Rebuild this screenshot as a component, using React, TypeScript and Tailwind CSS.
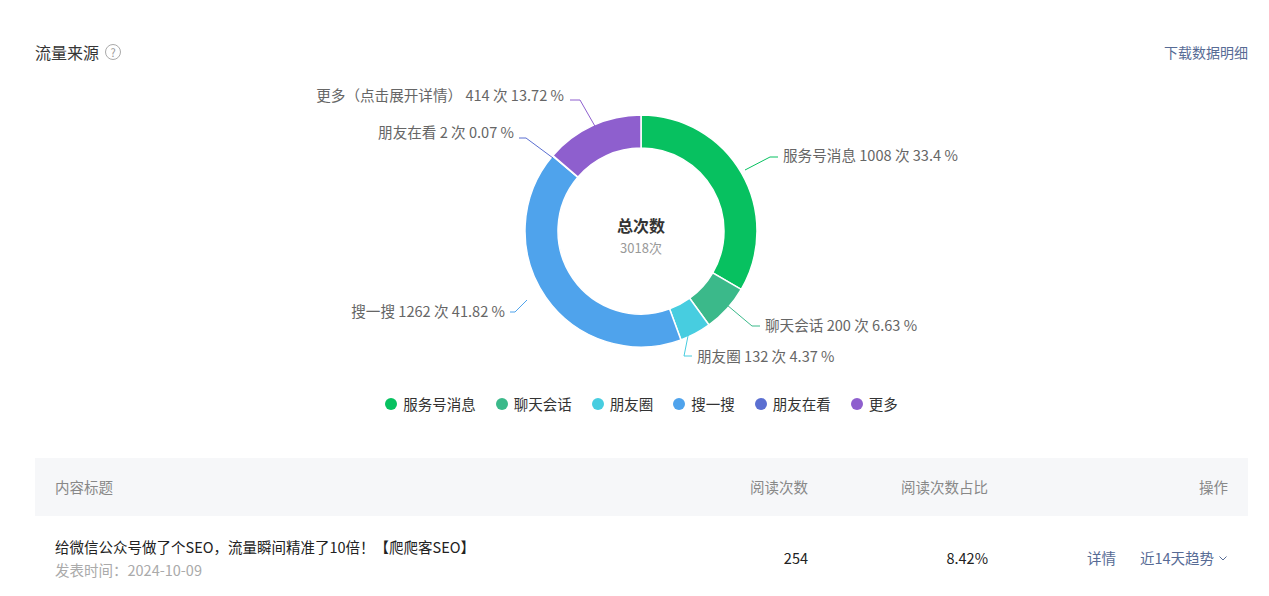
import React from "react";

const segs = [
  { v: 1008, c: "#07c160" },
  { v: 200, c: "#3bb98a" },
  { v: 132, c: "#47cde0" },
  { v: 1262, c: "#4fa3ec" },
  { v: 2, c: "#5b6fd1" },
  { v: 414, c: "#8e5fce" },
];

const legend = [
  ["服务号消息", "#07c160"],
  ["聊天会话", "#3bb98a"],
  ["朋友圈", "#47cde0"],
  ["搜一搜", "#4fa3ec"],
  ["朋友在看", "#5b6fd1"],
  ["更多", "#8e5fce"],
];

function arc(cx: number, cy: number, r0: number, r1: number, a0: number, a1: number) {
  const p = (r: number, a: number) => [cx + r * Math.sin(a), cy - r * Math.cos(a)];
  const large = a1 - a0 > Math.PI ? 1 : 0;
  const [x0, y0] = p(r1, a0);
  const [x1, y1] = p(r1, a1);
  const [x2, y2] = p(r0, a1);
  const [x3, y3] = p(r0, a0);
  return `M${x0} ${y0}A${r1} ${r1} 0 ${large} 1 ${x1} ${y1}L${x2} ${y2}A${r0} ${r0} 0 ${large} 0 ${x3} ${y3}Z`;
}

function Donut() {
  const total = segs.reduce((s, x) => s + x.v, 0);
  let a = 0;
  const labels: [string, string, number, number, string, boolean][] = [
    ["745,170 770,157 778,157", "服务号消息 1008 次 33.4 %", 783, 161, "#07c160", false],
    ["727,305 752,326 760,326", "聊天会话 200 次 6.63 %", 765, 331, "#3bb98a", false],
    ["689,331 684,356 692,356", "朋友圈 132 次 4.37 %", 697, 362, "#47cde0", false],
    ["527,300 515,312 510,312", "搜一搜 1262 次 41.82 %", 505, 317, "#4fa3ec", true],
    ["553,158 526,138 519,138", "朋友在看 2 次 0.07 %", 514, 138, "#5b6fd1", true],
    ["596,128 580,100 570,100", "更多（点击展开详情） 414 次 13.72 %", 564, 101, "#8e5fce", true],
  ];
  return (
    <svg width="1213" height="300" className="block">
      <g transform="translate(-35,-80)">
        {segs.map((s, i) => {
          const a0 = a;
          const a1 = a + (s.v / total) * Math.PI * 2;
          a = a1;
          return <path key={i} d={arc(641, 231, 83, 116, a0, Math.max(a1, a0 + 0.004))} fill={s.c} stroke="#fff" strokeWidth="1.5" />;
        })}
        {labels.map(([pts, t, x, y, c, end], i) => (
          <g key={i}>
            <polyline points={pts} fill="none" stroke={c} strokeWidth="1" />
            <text x={x} y={y} fontSize="14.6" fill="#666" textAnchor={end ? "end" : "start"}>{t}</text>
          </g>
        ))}
        <text x="641" y="232" fontSize="16" fontWeight="bold" fill="#333" textAnchor="middle">总次数</text>
        <text x="641" y="253" fontSize="13" fill="#999" textAnchor="middle">3018次</text>
      </g>
    </svg>
  );
}

export default function App() {
  return (
    <div className="h-[596px] w-[1269px] bg-white pl-[35px] pr-[21px] pt-[40px] text-[14px] text-[#333]" style={{ fontFamily: '"Noto Sans CJK SC", "Noto Sans", sans-serif' }}>
      <div className="flex h-[24px] items-center justify-between">
        <div className="flex items-center gap-[6px]">
          <span className="text-[16px] text-[#353535]">流量来源</span>
          <span className="flex h-[16px] w-[16px] items-center justify-center rounded-full border border-[#aaa] text-[11px] leading-none text-[#999]">?</span>
        </div>
        <span className="text-[14px] text-[#576b95]">下载数据明细</span>
      </div>
      <div className="mt-[16px]">
        <Donut />
      </div>
      <div className="mt-[12px] flex h-[24px] items-center justify-center gap-[20px]">
        {legend.map(([t, c]) => (
          <div key={t} className="flex items-center gap-[6px]">
            <span className="h-[12px] w-[12px] rounded-full" style={{ background: c }} />
            <span className="text-[14.5px] text-[#333]">{t}</span>
          </div>
        ))}
      </div>
      <div className="mt-[42px]">
        <div className="flex h-[58px] items-center bg-[#f6f7f9] px-[20px] text-[14.5px] text-[#888]">
          <div className="flex-1">内容标题</div>
          <div className="w-[120px] text-right">阅读次数</div>
          <div className="w-[180px] text-right">阅读次数占比</div>
          <div className="w-[240px] text-right">操作</div>
        </div>
        <div className="flex h-[84px] items-center px-[20px] text-[14.5px]">
          <div className="flex-1">
            <div className="text-[#222]">给微信公众号做了个SEO，流量瞬间精准了10倍！【爬爬客SEO】</div>
            <div className="mt-[1px] text-[#aaa]">发表时间：2024-10-09</div>
          </div>
          <div className="w-[120px] text-right text-[#222]">254</div>
          <div className="w-[180px] text-right text-[#222]">8.42%</div>
          <div className="flex w-[240px] items-center justify-end gap-[24px] text-[#576b95]">
            <span>详情</span>
            <span className="flex items-center gap-[4px]">近14天趋势
              <svg width="10" height="10" viewBox="0 0 10 10"><path d="M1.5 3.5 5 7 8.5 3.5" fill="none" stroke="#576b95" strokeWidth="1" /></svg>
            </span>
          </div>
        </div>
      </div>
    </div>
  );
}
